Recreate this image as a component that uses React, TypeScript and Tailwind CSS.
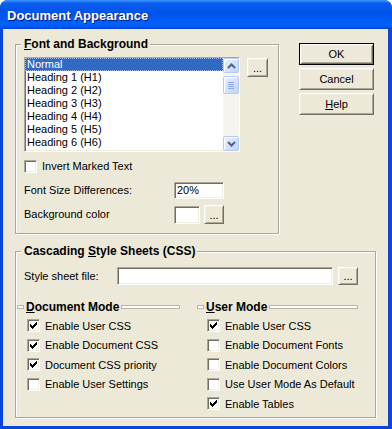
import React from 'react';

const sunken =
  'border border-t-[#ACA899] border-l-[#ACA899] border-b-white border-r-white shadow-[inset_1px_1px_#716F64,inset_-1px_-1px_#F1EFE2]';
const raised =
  'border border-t-white border-l-white border-b-[#716F64] border-r-[#716F64] shadow-[inset_1px_1px_#F1EFE2,inset_-1px_-1px_#ACA899]';
const group =
  'border border-[#ACA899] shadow-[inset_1px_1px_#fff,1px_1px_#fff] min-w-0';

const Check: React.FC<{ checked?: boolean }> = ({ checked }) => (
  <span className={`w-[13px] h-[13px] bg-white shrink-0 flex ${sunken}`}>
    {checked && (
      <svg width="11" height="11" viewBox="0 0 11 11" shapeRendering="crispEdges">
        <path
          d="M2 4h1v3h-1z M3 5h1v3h-1z M4 6h1v3h-1z M5 5h1v3h-1z M6 4h1v3h-1z M7 3h1v3h-1z M8 2h1v3h-1z"
          fill="#000"
        />
      </svg>
    )}
  </span>
);

const DotsButton: React.FC<{ className?: string }> = ({ className = '' }) => (
  <button className={`bg-[#ECE9D8] flex items-end justify-center pb-[2px] text-[11px] leading-none ${raised} ${className}`}>
    ...
  </button>
);

const Legend: React.FC<{ children: React.ReactNode }> = ({ children }) => (
  <legend className="-ml-[3px] pl-[3px] pr-[2px] bg-[#ECE9D8] font-bold text-[12px] leading-[14px]">{children}</legend>
);

const ScrollBtn: React.FC<{ down?: boolean }> = ({ down }) => (
  <div className="h-[15px] rounded-[2px] border border-[#B7CAF5] bg-[linear-gradient(135deg,#EAF0FF,#C2D4FC)] shadow-[inset_1px_1px_#fff] flex items-center justify-center">
    <svg width="9" height="6" viewBox="0 0 9 6">
      <path d={down ? 'M1 1l3.5 3.5L8 1' : 'M1 5l3.5-3.5L8 5'} stroke="#4D6185" strokeWidth="2" fill="none" />
    </svg>
  </div>
);

const ModeHeader: React.FC<{ u: string; rest: string }> = ({ u, rest }) => (
  <div className="flex items-center h-[14px] gap-[2px]">
    <span className="w-[7px] h-[4px] border border-[#B8B5A6] bg-white" />
    <span className="font-bold text-[12px] leading-[14px]">
      <span className="underline">{u}</span>
      {rest}
    </span>
    <span className="flex-1 h-[4px] border border-[#B8B5A6] bg-white" />
  </div>
);

const Row: React.FC<{ checked?: boolean; label: string }> = ({ checked, label }) => (
  <div className="flex items-center h-[19.5px] pl-[10px] gap-[5px]">
    <Check checked={checked} />
    <span>{label}</span>
  </div>
);

const items = ['Normal', 'Heading 1 (H1)', 'Heading 2 (H2)', 'Heading 3 (H3)', 'Heading 4 (H4)', 'Heading 5 (H5)', 'Heading 6 (H6)'];

export default function App() {
  return (
    <div className="w-[392px] h-[429px] flex flex-col rounded-t-[8px] overflow-hidden bg-[#0A45DC] text-black text-[11px] font-['Liberation_Sans',Arial,sans-serif]">
      <div className="h-[29px] shrink-0 flex items-center pl-[7px] pt-[2px] bg-[linear-gradient(to_bottom,#3D95FF,#0A5DEE_12%,#0053EA_45%,#0062FA_85%,#005BF5_92%,#0040D8)]">
        <span className="text-white font-bold text-[13px] [text-shadow:1px_1px_#0A1883]">Document Appearance</span>
      </div>

      <div className="flex-1 flex flex-col bg-[#ECE9D8] ml-[3px] mr-[4px] mb-[3px] px-[12px] pt-[8px]">
        <div className="flex items-start">
          <fieldset className={`w-[264px] px-[8px] pb-[9px] ${group}`}>
            <Legend>
              <span className="underline">F</span>ont and Background
            </Legend>
            <div className="flex items-start mt-[6px]">
              <div className={`w-[216px] h-[95px] bg-white flex ${sunken}`}>
                <div className="flex-1 flex flex-col">
                  {items.map((t, i) => (
                    <div
                      key={t}
                      className={`h-[13px] leading-[13px] pl-[2px] whitespace-nowrap ${
                        i === 0 ? 'bg-[#316AC5] text-white outline outline-1 outline-dotted outline-[#9DB6E4] -outline-offset-1' : ''
                      }`}
                    >
                      {t}
                    </div>
                  ))}
                </div>
                <div className="w-[16px] flex flex-col bg-[#F5F4EF]">
                  <ScrollBtn />
                  <div className="mt-[3px] h-[18px] rounded-[2px] border border-[#B7CAF5] bg-[linear-gradient(135deg,#EAF0FF,#C2D4FC)] shadow-[inset_1px_1px_#fff] flex flex-col items-center justify-center gap-[1px]">
                    <span className="w-[6px] h-[1px] bg-[#8CA6E8]" />
                    <span className="w-[6px] h-[1px] bg-[#8CA6E8]" />
                    <span className="w-[6px] h-[1px] bg-[#8CA6E8]" />
                    <span className="w-[6px] h-[1px] bg-[#8CA6E8]" />
                  </div>
                  <div className="flex-1" />
                  <ScrollBtn down />
                </div>
              </div>
              <DotsButton className="ml-[7px] mt-[1px] w-[21px] h-[19px]" />
            </div>

            <div className="flex items-center gap-[5px] mt-[8px] h-[13px]">
              <Check />
              <span>Invert Marked Text</span>
            </div>

            <div className="flex items-center mt-[9px]">
              <span className="w-[150px]">Font Size Differences:</span>
              <div className={`w-[50px] h-[17px] bg-white pl-[2px] leading-[15px] ${sunken}`}>20%</div>
            </div>

            <div className="flex items-center mt-[6px]">
              <span className="w-[150px]">Background color</span>
              <div className={`w-[26px] h-[18px] bg-white ${sunken}`} />
              <DotsButton className="ml-[4px] w-[20px] h-[19px]" />
            </div>
          </fieldset>

          <div className="ml-[20px] mt-[6px] flex flex-col gap-[3px]">
            <button className="w-[75px] h-[22px] bg-[#ECE9D8] border border-black shadow-[inset_1px_1px_#fff,inset_-1px_-1px_#716F64,inset_2px_2px_#F1EFE2,inset_-2px_-2px_#ACA899]">
              OK
            </button>
            <button className={`w-[75px] h-[22px] bg-[#ECE9D8] ${raised}`}>Cancel</button>
            <button className={`w-[75px] h-[22px] bg-[#ECE9D8] ${raised}`}>
              <span className="underline">H</span>elp
            </button>
          </div>
        </div>

        <fieldset className={`mt-[10px] w-[361px] px-[8px] pb-[3px] ${group}`}>
          <Legend>
            Cascading <span className="underline">S</span>tyle Sheets (CSS)
          </Legend>
          <div className="flex items-center mt-[9px]">
            <span className="w-[93px]">Style sheet file:</span>
            <div className={`w-[216px] h-[18px] bg-white ${sunken}`} />
            <DotsButton className="ml-[5px] w-[20px] h-[18px]" />
          </div>

          <div className="-ml-[7px] mt-[15px] flex gap-[17px]">
            <div className="w-[163px]">
              <ModeHeader u="D" rest="ocument Mode" />
              <div className="mt-[2px]">
                <Row checked label="Enable User CSS" />
                <Row checked label="Enable Document CSS" />
                <Row checked label="Document CSS priority" />
                <Row label="Enable User Settings" />
              </div>
            </div>
            <div className="w-[161px]">
              <ModeHeader u="U" rest="ser Mode" />
              <div className="mt-[2px]">
                <Row checked label="Enable User CSS" />
                <Row label="Enable Document Fonts" />
                <Row label="Enable Document Colors" />
                <Row label="Use User Mode As Default" />
                <Row checked label="Enable Tables" />
              </div>
            </div>
          </div>
        </fieldset>
      </div>
    </div>
  );
}
